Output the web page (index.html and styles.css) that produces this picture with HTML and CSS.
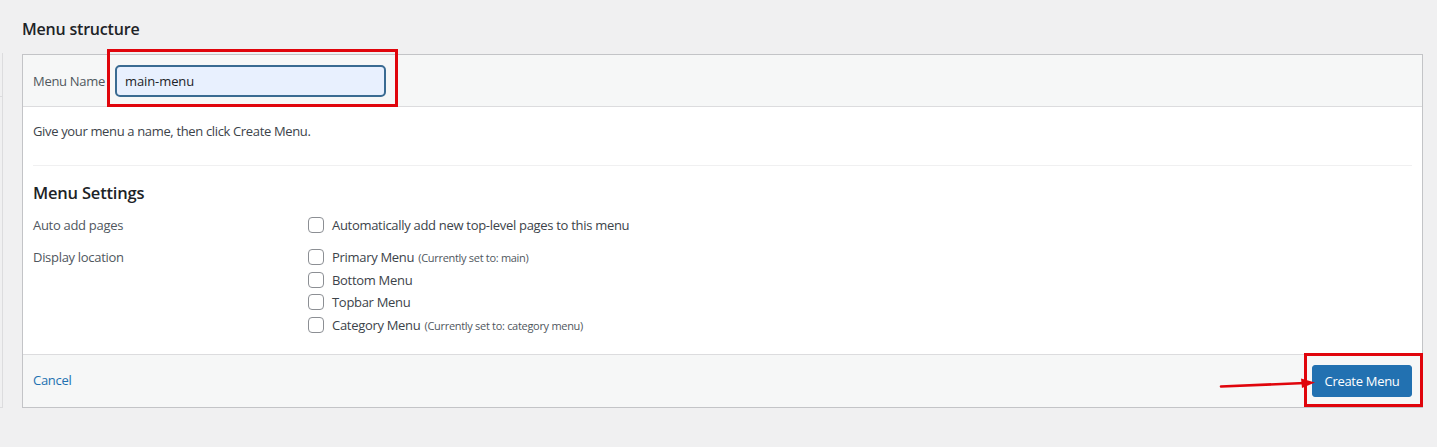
FILE: index.html
```html
<!DOCTYPE html>
<html lang="en">
<head>
<meta charset="utf-8">
<title>Menu structure</title>
<link rel="stylesheet" href="styles.css">
</head>
<body>
<div class="page">
  <div class="side-col">
    <div class="side-box"><div class="side-head"></div></div>
  </div>
  <div class="main-col">
    <h2 class="title">Menu structure</h2>
    <div class="menu-box">
      <div class="box-header">
        <label class="name-label" for="menu-name">Menu Name</label>
        <div class="name-wrap">
          <input id="menu-name" class="name-input" type="text" value="main-menu">
          <span class="annot-box annot-input"></span>
        </div>
      </div>
      <div class="box-body">
        <p class="hint">Give your menu a name, then click Create Menu.</p>
        <div class="divider"></div>
        <h3 class="settings-title">Menu Settings</h3>
        <div class="settings">
          <div class="set-label">Auto add pages</div>
          <div class="set-options">
            <label class="opt"><span class="cb"></span>Automatically add new top-level pages to this menu</label>
          </div>
          <div class="set-label set-label-loc">Display location</div>
          <div class="set-options set-options-loc">
            <label class="opt"><span class="cb"></span>Primary Menu <span class="note">(Currently set to: main)</span></label>
            <label class="opt"><span class="cb"></span>Bottom Menu</label>
            <label class="opt"><span class="cb"></span>Topbar Menu</label>
            <label class="opt"><span class="cb"></span>Category Menu <span class="note">(Currently set to: category menu)</span></label>
          </div>
        </div>
      </div>
      <div class="box-footer">
        <a class="cancel" href="#">Cancel</a>
        <div class="btn-wrap">
          <svg class="annot-arrow" width="100" height="14" viewBox="0 0 100 14">
            <path d="M2 9.5 L86 6" stroke="#e0050c" stroke-width="2.6" fill="none" stroke-linecap="round"/>
            <path d="M82 1.5 L96 5.5 L83 11 Z" fill="#e0050c"/>
          </svg>
          <button class="create-btn" type="button">Create Menu</button>
          <span class="annot-box annot-btn"></span>
        </div>
      </div>
    </div>
  </div>
</div>
</body>
</html>
```

FILE: styles.css
```css
* { box-sizing: border-box; }
html, body { margin: 0; padding: 0; }
body {
  background: #f0f0f1;
  font-family: "Open Sans", "Noto Sans", sans-serif;
  font-size: 13px;
  color: #3c434a;
  width: 1437px;
  height: 447px;
  overflow: hidden;
}
.page {
  display: flex;
  align-items: flex-start;
}
.side-col {
  width: 3px;
  padding-top: 53px;
}
.side-box {
  height: 355px;
  border-right: 1px solid #dcdcde;
  border-bottom: 1px solid #dcdcde;
}
.side-head {
  height: 44px;
  border-bottom: 1px solid #dcdcde;
}
.main-col {
  margin-left: 19px;
  width: 1401px;
}
.title {
  margin: 0;
  padding-top: 18px;
  height: 54px;
  font-size: 16px;
  font-weight: 600;
  color: #1d2327;
  line-height: 22px;
  letter-spacing: -0.2px;
}
.menu-box {
  border: 1px solid #c3c4c7;
  background: #fff;
}
.box-header {
  background: #f6f7f7;
  border-bottom: 1px solid #dcdcde;
  display: flex;
  align-items: center;
  padding: 10px 10px 9px 10px;
}
.name-label {
  width: 82px;
  color: #50575e;
  letter-spacing: -0.3px;
}
.name-wrap {
  position: relative;
}
.name-input {
  display: block;
  width: 271px;
  height: 32px;
  border: 2px solid #3a6b92;
  border-radius: 5px;
  background: #e8f0fe;
  font-family: inherit;
  font-size: 13px;
  color: #1d2327;
  padding: 0 8px;
  outline: none;
  letter-spacing: -0.1px;
}
.annot-box {
  position: absolute;
  border: 3px solid #e0050c;
  pointer-events: none;
}
.annot-input {
  left: -8px;
  right: -12px;
  top: -16px;
  bottom: -10px;
}
.box-body {
  padding: 10px 10px 19px 10px;
}
.hint {
  margin: 4px 0 0 0;
  line-height: 20px;
  color: #3c434a;
  letter-spacing: -0.35px;
}
.divider {
  margin-top: 24px;
  border-top: 1px solid #f0f0f1;
}
.settings-title {
  margin: 15px 0 0 0;
  font-size: 16.5px;
  font-weight: 600;
  line-height: 24px;
  color: #1d2327;
  letter-spacing: -0.2px;
}
.settings {
  margin-top: 10px;
  display: grid;
  grid-template-columns: 275px 1fr;
  row-gap: 11px;
}
.set-label {
  line-height: 20px;
  color: #50575e;
  letter-spacing: -0.3px;
}
.set-options {
  display: flex;
  flex-direction: column;
  gap: 2.3px;
}
.opt {
  display: flex;
  align-items: center;
  height: 20.5px;
  color: #3c434a;
  letter-spacing: -0.3px;
  white-space: nowrap;
}
.cb {
  width: 16px;
  height: 16px;
  border: 1px solid #8c8f94;
  border-radius: 4px;
  background: #fff;
  margin-right: 8px;
  flex: none;
}
.note {
  font-size: 11px;
  color: #50575e;
  margin-left: 4px;
  letter-spacing: -0.3px;
  padding-top: 1px;
}
.box-footer {
  background: #f6f7f7;
  border-top: 1px solid #dcdcde;
  display: flex;
  align-items: center;
  justify-content: space-between;
  padding: 10px 10px 10px 10px;
  height: 53px;
}
.cancel {
  color: #2271b1;
  text-decoration: none;
  letter-spacing: -0.3px;
  margin-top: -2px;
}
.btn-wrap {
  position: relative;
}
.create-btn {
  display: block;
  width: 100px;
  height: 32px;
  background: #2271b1;
  border: 1px solid #2271b1;
  border-radius: 3px;
  color: #fff;
  font-family: inherit;
  font-size: 13px;
  padding: 0;
  letter-spacing: -0.3px;
}
.annot-btn {
  left: -8px;
  right: -11px;
  top: -12px;
  bottom: -10px;
}
.annot-arrow {
  position: absolute;
  left: -93px;
  top: 12px;
}
```
